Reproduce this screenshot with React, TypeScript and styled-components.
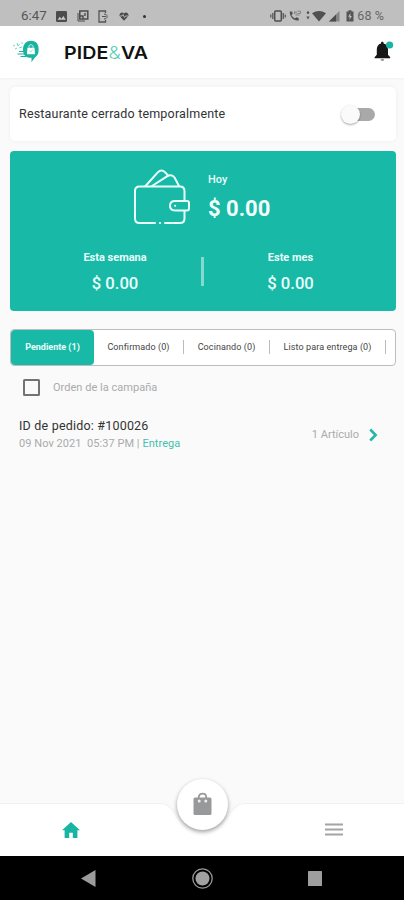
import React from "react";
import styled, { createGlobalStyle } from "styled-components";

const TEAL = "#18b9a7";

const Global = createGlobalStyle`
  * { box-sizing: border-box; }
  body { margin: 0; background: #fafafa; }
`;

const Screen = styled.div`
  width: 404px;
  height: 900px;
  display: flex;
  flex-direction: column;
  background: #fafafa;
  font-family: Roboto, "Liberation Sans", sans-serif;
  overflow: hidden;
`;

const Label = styled.span<{ $size: number; $color: string; $weight?: number; $track?: number; $line?: number }>`
  display: block;
  white-space: nowrap;
  font-size: ${(p) => p.$size}px;
  line-height: ${(p) => p.$line ?? 16}px;
  color: ${(p) => p.$color};
  font-weight: ${(p) => p.$weight ?? 400};
  letter-spacing: ${(p) => p.$track ?? 0}px;
`;

const StatusBar = styled.div`
  height: 26px;
  flex: none;
  background: #bfbfbf;
  display: flex;
  justify-content: space-between;
  padding: 6px 20px 0 21px;
`;

const StatusGroup = styled.div<{ $gap: number }>`
  display: flex;
  align-items: center;
  gap: ${(p) => p.$gap}px;
  height: 20px;
  svg { display: block; flex: none; }
`;

const Dot = styled.div`
  width: 3px;
  height: 3px;
  margin-left: 5px;
  border-radius: 50%;
  background: #333;
`;

const Header = styled.header`
  height: 52px;
  flex: none;
  background: #fff;
  box-shadow: 0 1px 2px rgba(0, 0, 0, 0.04);
  display: flex;
  align-items: center;
  padding: 0 10px 0 12px;
`;

const Brand = styled.div`
  margin-left: 22px;
  flex: 1;
  font: 600 17.5px/20px Inter, sans-serif;
  letter-spacing: 0.1px;
  transform: scaleX(1.12);
  transform-origin: left center;
  padding-top: 1px;
  color: #111;
  span { color: #5fd0b4; font-weight: 300; }
`;

const ClosedCard = styled.section`
  height: 54px;
  margin: 9px 8px 0 10px;
  flex: none;
  background: #fff;
  border-radius: 5px;
  box-shadow: 0 0 4px rgba(0, 0, 0, 0.05);
  display: flex;
  align-items: center;
  justify-content: space-between;
  padding: 0 21px 0 9px;
`;

const Track = styled.div`
  width: 31px;
  height: 13px;
  border-radius: 7px;
  background: #a9a9a9;
  display: flex;
  align-items: center;
`;

const Thumb = styled.div`
  width: 19px;
  height: 19px;
  flex: none;
  margin-left: -3px;
  border-radius: 50%;
  background: #fafafa;
  box-shadow: 0 1px 2px rgba(0, 0, 0, 0.35);
`;

const Earnings = styled.section`
  height: 160px;
  margin: 9.5px 8px 0 10px;
  flex: none;
  background: ${TEAL};
  border-radius: 4px;
`;

const Today = styled.div`
  display: flex;
  height: 94.5px;
  padding: 17px 0 0 123px;
`;

const TodayText = styled.div`
  margin-left: 17px;
  padding-top: 4px;
`;

const Periods = styled.div`
  display: grid;
  grid-template-columns: 191px 3px 173px;
`;

const Period = styled.div<{ $shift: number }>`
  display: flex;
  flex-direction: column;
  align-items: center;
  padding: 5px 0 0 ${(p) => p.$shift}px;
  gap: 7px;
`;

const PeriodRule = styled.div`
  height: 29px;
  margin-top: 12px;
  background: #84dacf;
`;

const Tabs = styled.nav`
  height: 36.5px;
  margin: 18.5px 8px 0 10px;
  flex: none;
  background: #fff;
  border: 1px solid #bdbdbd;
  border-radius: 4px;
  display: flex;
  align-items: center;
`;

const Tab = styled.div<{ $width: number; $active?: boolean }>`
  width: ${(p) => p.$width}px;
  height: 35px;
  flex: none;
  display: flex;
  align-items: center;
  justify-content: center;
  padding-bottom: 1px;
  border-radius: 4px;
  background: ${(p) => (p.$active ? TEAL : "transparent")};
`;

const TabRule = styled.div`
  width: 1px;
  height: 14px;
  background: #bbb;
`;

const CampaignRow = styled.div`
  display: flex;
  align-items: center;
  height: 17px;
  margin: 13.5px 0 0 23px;
  flex: none;
  gap: 13px;
`;

const Checkbox = styled.div`
  width: 17px;
  height: 17px;
  border: 2px solid #737373;
  border-radius: 1.5px;
`;

const Order = styled.div`
  display: flex;
  justify-content: space-between;
  align-items: center;
  margin: 22px 26px 0 19px;
  flex: none;
`;

const OrderMeta = styled.div`
  display: flex;
  margin-top: 2px;
`;

const Articles = styled.div`
  display: flex;
  align-items: center;
  gap: 10px;
  svg { display: block; }
`;

const BottomNav = styled.nav`
  height: 53px;
  margin-top: auto;
  flex: none;
  position: relative;
  display: grid;
  grid-template-columns: 141px 123px 140px;
  align-items: center;
  justify-items: center;
`;

const NavShape = styled.svg`
  position: absolute;
  left: 0;
  top: 0;
`;

const NavItem = styled.div`
  position: relative;
  svg { display: block; }
`;

const Fab = styled.div`
  position: absolute;
  left: 177px;
  top: -24px;
  width: 51px;
  height: 51px;
  border-radius: 50%;
  background: #fff;
  box-shadow: 0 2px 4px rgba(0, 0, 0, 0.38);
  display: flex;
  align-items: center;
  justify-content: center;
  padding-bottom: 2px;
`;

const SystemBar = styled.div`
  height: 44px;
  flex: none;
  background: #000;
  display: flex;
  justify-content: space-between;
  align-items: center;
  padding: 1px 82px 0 81px;
`;

const PictureIcon = () => (
  <svg width="11" height="11" viewBox="0 0 11 11">
    <rect width="11" height="11" rx="1.3" fill="#4c4c4c" />
    <path d="M1.5 8.8 3.8 5.8l1.6 1.9 2-2.8 2.4 3.9Z" fill="#c8c8c8" />
  </svg>
);

const CastIcon = () => (
  <svg width="12" height="12" viewBox="0 0 12 12" fill="none" stroke="#4c4c4c">
    <path d="M1 3v8h7" strokeWidth="1" />
    <rect x="2.8" y="1" width="8" height="8" strokeWidth="1.5" />
    <path d="M3 6h3v3M8 3v3" strokeWidth="1.4" />
  </svg>
);

const PhoneSyncIcon = () => (
  <svg width="11" height="13" viewBox="0 0 11 13" fill="none" stroke="#555">
    <path d="M7.5 3V1H1v11h6.5v-2" strokeWidth="1.3" />
    <path d="M6 4.2a2.4 2.4 0 1 1 0 4.6M4 6.5h4" strokeWidth="1" />
  </svg>
);

const HeartIcon = () => (
  <svg width="10" height="9" viewBox="0 0 10 9">
    <path d="M5 8.8 1 4.6C-.7 2.4 2.5-1 5 1.4 7.5-1 10.7 2.4 9 4.6Z" fill="#4a4a4a" />
    <path d="M1 4h2l1-1.5 1.5 3L6.5 4H9" stroke="#bbb" strokeWidth=".9" fill="none" />
  </svg>
);

const VibrateIcon = () => (
  <svg width="16" height="12" viewBox="0 0 16 12" fill="none" stroke="#505050">
    <rect x="4.7" y="1" width="6.6" height="10" rx="1" strokeWidth="1.5" />
    <path d="M2.8 3v6M13.2 3v6M.8 4.5v3M15.2 4.5v3" strokeWidth="1.2" />
  </svg>
);

const CallIcon = () => (
  <svg width="13" height="12" viewBox="0 0 13 12">
    <path d="M.8 1.5h2.4l.5 2.6-1.2 1c.8 1.7 1.8 2.7 3.5 3.5l1.2-1.3 2.5.7v2.4C5 11.5.3 6.5.8 1.5Z" fill="#505050" />
    <path d="M5.5 4V1.3M7 1v3M8.5 1.2h3v2.3h-3M6.5 5h4" stroke="#777" strokeWidth=".8" fill="none" />
  </svg>
);

const WifiIcon = () => (
  <svg width="20" height="12" viewBox="0 0 20 12" fill="#505050">
    <path d="M2 .8 3.6 3H.4ZM2 9.500.4 6.500h3.200ZM1.200 2.500h1.600v1.500H1.200Z" />
    <path d="M6 3.300Q13 -1.500 20 3.300L13 11.500Z" />
  </svg>
);

const SignalIcon = () => (
  <svg width="11" height="11" viewBox="0 0 11 11">
    <path d="M10.5 0v10.5H0Z" fill="#858585" />
    <path d="M7 3.5v7H0Z" fill="#4c4c4c" />
  </svg>
);

const BatteryIcon = () => (
  <svg width="8" height="12" viewBox="0 0 8 12">
    <path d="M.5 1.5h2V.3h3v1.2h2v10h-7Z" fill="#555" />
    <path d="M4.5 3 2.200 6.800h1.500L3.500 10l2.300-4H4.300Z" fill="#c4c4c4" />
  </svg>
);

const BrandMark = () => (
  <svg width="30" height="24" viewBox="0 0 30 24">
    <path fillRule="evenodd" fill="#18b49f" d="M19 .8c5.500 0 8 4 7.600 9 .2 4-1.400 6-3.600 7.700L19.500 22v-4.200c-5.200 0-8.500-2-8.500-8.300C11 4 14.500.8 19 .8Zm-3.600 7L15 14.300h8l-.5-6.500Z" />
    <path d="M17 7.800v-1.500c0-2 4-2 4 0v1.500" stroke="#d5f3ee" strokeWidth="1" fill="none" />
    <path d="m17.500 10.700 1.200 1.200 2.200-2.400" stroke="#8ddcd0" fill="none" />
    <path d="M7 11.500h5M5.500 14h7.500M8.500 16.500h6" stroke="#18b49f" strokeWidth="1.200" fill="none" />
    <path d="M1 5l2 1M5 3l1 3 1.500-2M3 9l2-1M9 3h2M7 8l3-1" stroke="#76d5c5" strokeWidth="1" fill="none" />
  </svg>
);

const BellIcon = () => (
  <svg width="22" height="24" viewBox="0 0 22 24">
    <path d="M9 3.500V3c0-1.700 2.600-1.700 2.600 0v.5c3 .7 4.400 3 4.400 6v5.300l2.200 2.400v1H2.600v-1l2.200-2.400V9.500c0-3 1.300-5.300 4.200-6Z" fill="#161616" />
    <path d="M8.600 19.200h3.500c-.1 2-3.400 2-3.500 0Z" fill="#777" />
    <circle cx="17.600" cy="5" r="3.600" fill="#18b5a2" />
  </svg>
);

const WalletIcon = () => (
  <svg width="58" height="58" viewBox="0 0 58 58" fill="none" stroke="#e9fffb" strokeWidth="2" strokeLinecap="round" strokeLinejoin="round">
    <path d="M22 55H6.500Q2 55 2 50.500V23q0-4.500 4.500-4.500H47q4.500 0 4.500 4.500v9.500M51.500 43v7.500q0 4.500-4.500 4.500H32" />
    <path d="M26.900 55h.2" />
    <path d="M54 33H42q-5 0-5 4.700t5 4.700h12q2 0 2-2v-5.400q0-2-2-2Z" />
    <path d="M42 37.700h.2" />
    <path d="M12.500 18 25 4.200q3.500-3.400 7 0L35 7.500M19 18 34 8.300q5-2.600 7.500 1.200L46 18" />
  </svg>
);

const ArrowIcon = () => (
  <svg width="9" height="14" viewBox="0 0 9 14">
    <path d="m1.200 1.500 5.500 5.500-5.500 5.500" stroke="#20b8a7" strokeWidth="2.500" fill="none" />
  </svg>
);

const HomeIcon = () => (
  <svg width="18" height="16" viewBox="0 0 18 16">
    <path d="M9 0 0 8.200h2.600V16h4.600v-5.300h3.600V16h4.600V8.200H18Z" fill="#18b5a2" />
  </svg>
);

const MenuIcon = () => (
  <svg width="18" height="13" viewBox="0 0 18 13">
    <path d="M0 1.500h18M0 6.500h18M0 11.500h18" stroke="#a4a4a4" strokeWidth="2" />
  </svg>
);

const BagIcon = () => (
  <svg width="19" height="24" viewBox="0 0 19 24">
    <path d="M5.800 6.500V5c0-4.500 7.400-4.500 7.400 0v1.500" fill="none" stroke="#97999a" strokeWidth="1.800" />
    <rect x=".5" y="5.500" width="18" height="17.500" rx="1.500" fill="#97999a" />
    <circle cx="6.200" cy="9" r="1.500" fill="#eee" />
    <circle cx="12.800" cy="9" r="1.500" fill="#eee" />
  </svg>
);

const BackIcon = () => (
  <svg width="15" height="17" viewBox="0 0 15 17"><path d="M14.500 0v17L0 8.500Z" fill="#9b9b9b" /></svg>
);

const CircleIcon = () => (
  <svg width="21" height="21" viewBox="0 0 21 21">
    <circle cx="10.500" cy="10.500" r="9.700" fill="none" stroke="#999" strokeWidth="1.300" />
    <circle cx="10.500" cy="10.500" r="7" fill="#a0a0a0" />
  </svg>
);

const SquareIcon = () => (
  <svg width="14" height="15" viewBox="0 0 14 15"><rect width="14" height="15" rx=".6" fill="#9e9e9e" /></svg>
);

export default function App() {
  return (
    <>
      <Global />
      <Screen>
        <StatusBar>
          <StatusGroup $gap={9.5}>
            <Label $size={13.3} $color="#555">6:47</Label>
            <PictureIcon />
            <CastIcon />
            <PhoneSyncIcon />
            <HeartIcon />
            <Dot />
          </StatusGroup>
          <StatusGroup $gap={3.2}>
            <VibrateIcon />
            <CallIcon />
            <WifiIcon />
            <SignalIcon />
            <span />
            <BatteryIcon />
            <Label $size={12.5} $color="#666" $track={0.1}>68 %</Label>
          </StatusGroup>
        </StatusBar>

        <Header>
          <BrandMark />
          <Brand>PIDE<span>&amp;</span>VA</Brand>
          <BellIcon />
        </Header>

        <ClosedCard>
          <Label $size={12.5} $color="#333" $track={0.18}>Restaurante cerrado temporalmente</Label>
          <Track><Thumb /></Track>
        </ClosedCard>

        <Earnings>
          <Today>
            <WalletIcon />
            <TodayText>
              <Label $size={11} $color="#e9fffb" $weight={500}>Hoy</Label>
              <Label $size={22} $color="#f4fffd" $weight={700} $line={41}>$ 0.00</Label>
            </TodayText>
          </Today>
          <Periods>
            <Period $shift={19}>
              <Label $size={11} $color="#e9fffb" $weight={700}>Esta semana</Label>
              <Label $size={16.7} $color="#e9fffb" $weight={500} $line={22}>$ 0.00</Label>
            </Period>
            <PeriodRule />
            <Period $shift={0}>
              <Label $size={11} $color="#e9fffb" $weight={700}>Este mes</Label>
              <Label $size={16.7} $color="#e9fffb" $weight={500} $line={22}>$ 0.00</Label>
            </Period>
          </Periods>
        </Earnings>

        <Tabs>
          <Tab $width={83} $active><Label $size={9} $color="#e9fffb" $weight={700}>Pendiente (1)</Label></Tab>
          <Tab $width={89}><Label $size={9} $color="#444" $track={0.1}>Confirmado (0)</Label></Tab>
          <TabRule />
          <Tab $width={85}><Label $size={9} $color="#444" $track={0.1}>Cocinando (0)</Label></Tab>
          <TabRule />
          <Tab $width={115}><Label $size={9} $color="#444" $track={0.1}>Listo para entrega (0)</Label></Tab>
          <TabRule />
        </Tabs>

        <CampaignRow>
          <Checkbox />
          <Label $size={11} $color="#aaa" $track={0.03}>Orden de la campaña</Label>
        </CampaignRow>

        <Order>
          <div>
            <Label $size={12.5} $color="#333" $track={0.2}>ID de pedido: #100026</Label>
            <OrderMeta>
              <Label $size={11} $color="#aaa" $track={0.05}>09 Nov 2021&nbsp; 05:37 PM&nbsp;|&nbsp;</Label>
              <Label $size={11} $color="#45bfae" $track={0.05}>Entrega</Label>
            </OrderMeta>
          </div>
          <Articles>
            <Label $size={11} $color="#aaa">1 Artículo</Label>
            <ArrowIcon />
          </Articles>
        </Order>

        <BottomNav>
          <NavShape width="404" height="53" viewBox="0 0 404 53">
            <path d="M0 .5H160C174 .5 173 27 202.500 27S231 .5 245 .5H404V53H0Z" fill="#fff" />
            <path d="M0 .5H160Q170 .5 175 10M230 10Q235 .5 245 .5H404" fill="none" stroke="#f1f1f1" />
          </NavShape>
          <NavItem><HomeIcon /></NavItem>
          <span />
          <NavItem><MenuIcon /></NavItem>
          <Fab><BagIcon /></Fab>
        </BottomNav>
        <SystemBar>
          <BackIcon />
          <CircleIcon />
          <SquareIcon />
        </SystemBar>
      </Screen>
    </>
  );
}
